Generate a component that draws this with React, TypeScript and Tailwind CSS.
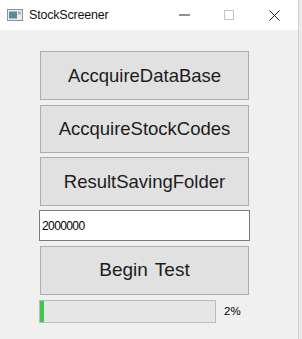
export default function App() {
  const progress = 2;

  return (
    <div className="flex h-[339px] w-[302px] bg-[#f0f0f0] font-['Liberation_Sans',Arial,sans-serif] text-black">
      <div className="flex w-[299px] flex-col border-r border-[#cfcfcf]">
        {/* title bar */}
        <div className="flex h-[30px] shrink-0 items-center bg-white">
          <svg className="ml-[7px] h-[12px] w-[16px]" viewBox="0 0 16 12">
            <rect x="0.5" y="0.5" width="15" height="11" fill="#e9edf0" stroke="#8a949c" />
            <rect x="2" y="2.5" width="8" height="7" fill="#5d8a98" />
            <rect x="11" y="2.5" width="3" height="3" fill="#9fb4bd" />
          </svg>
          <span className="ml-[6px] text-[12.5px] tracking-[-0.2px] text-[#111]">StockScreener</span>
          <div className="ml-auto flex items-center">
            <svg className="mr-[34px] h-[10px] w-[11px]" viewBox="0 0 11 10">
              <line x1="0" y1="5" x2="11" y2="5" stroke="#222" strokeWidth="1" />
            </svg>
            <svg className="mr-[35px] h-[10px] w-[10px]" viewBox="0 0 10 10">
              <rect x="0.5" y="0.5" width="9" height="9" fill="none" stroke="#c4c4c4" />
            </svg>
            <svg className="mr-[18px] h-[11px] w-[11px]" viewBox="0 0 11 11">
              <path d="M0.5 0.5 L10.5 10.5 M10.5 0.5 L0.5 10.5" stroke="#222" strokeWidth="1" />
            </svg>
          </div>
        </div>

        {/* body */}
        <div className="flex flex-col pl-[39px] pt-[21px] text-[#1c1c1c]">
          <button className="ml-[1px] h-[49px] w-[209px] border border-[#adadad] bg-[#e1e1e1] text-[18.5px]">
            AccquireDataBase
          </button>
          <button className="ml-[1px] mt-[5px] h-[48px] w-[209px] border border-[#adadad] bg-[#e1e1e1] text-[18.5px]">
            AccquireStockCodes
          </button>
          <button className="ml-[1px] mt-[4px] h-[49px] w-[209px] border border-[#adadad] bg-[#e1e1e1] text-[18.5px]">
            ResultSavingFolder
          </button>
          <div className="mt-[4px] flex h-[31px] w-[211px] items-center border border-[#7a7a7a] bg-white pl-[2px] text-[12px] tracking-[-0.6px] text-black">
            2000000
          </div>
          <button className="ml-[1px] mt-[5px] h-[49px] w-[209px] border border-[#adadad] bg-[#e1e1e1] text-[19px] [word-spacing:2px]">
            Begin Test
          </button>
          <div className="mt-[5px] flex items-center">
            <div className="h-[23px] w-[177px] border border-[#bcbcbc] bg-[#e6e6e6]">
              <div className="h-full bg-[#3cc853]" style={{ width: `${Math.max(3, (175 * progress) / 100)}px` }} />
            </div>
            <span className="ml-[8px] text-[11.5px] text-black">{progress}%</span>
          </div>
        </div>
      </div>
      <div className="flex-1 bg-[#ececec]" />
    </div>
  );
}
